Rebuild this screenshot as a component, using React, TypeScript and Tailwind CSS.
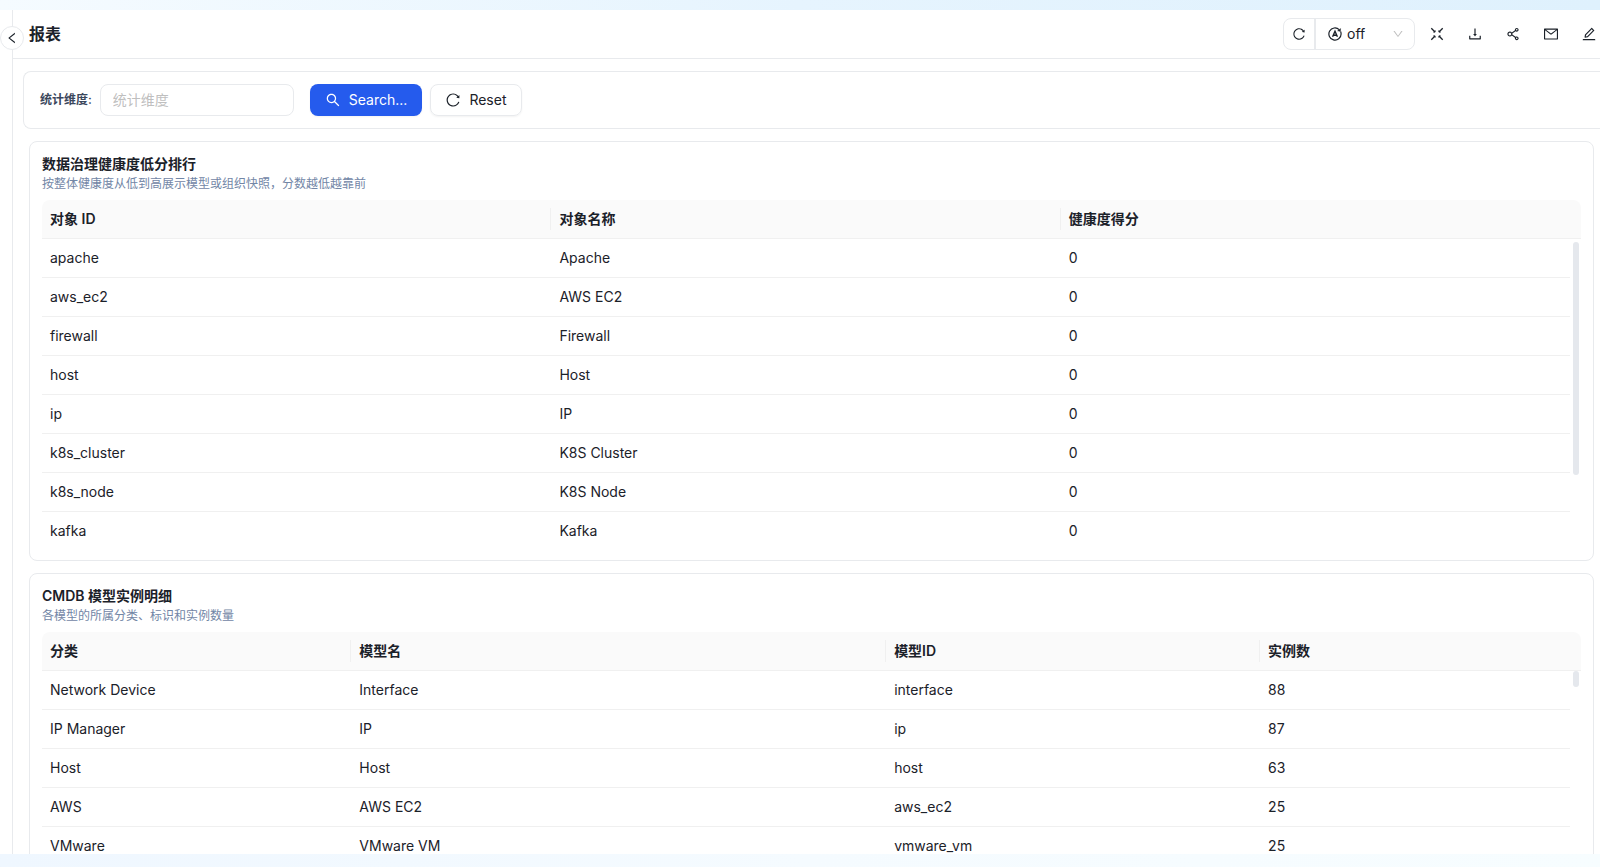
import { useState } from "react";
import {
  AiOutlineDown,
  AiOutlineDownload,
  AiOutlineEdit,
  AiOutlineLeft,
  AiOutlineMail,
  AiOutlineReload,
  AiOutlineSearch,
  AiOutlineShareAlt,
} from "react-icons/ai";

interface Column {
  title: string;
  width: string;
}

interface ReportTableProps {
  title: string;
  description: string;
  columns: Column[];
  rows: string[][];
  thumb: string;
}

const healthColumns: Column[] = [
  { title: "对象 ID", width: "w-[33.1%]" },
  { title: "对象名称", width: "w-[33.1%]" },
  { title: "健康度得分", width: "w-auto" },
];

const healthRows = [
  ["apache", "Apache", "0"],
  ["aws_ec2", "AWS EC2", "0"],
  ["firewall", "Firewall", "0"],
  ["host", "Host", "0"],
  ["ip", "IP", "0"],
  ["k8s_cluster", "K8S Cluster", "0"],
  ["k8s_node", "K8S Node", "0"],
  ["kafka", "Kafka", "0"],
];

const modelColumns: Column[] = [
  { title: "分类", width: "w-[20.1%]" },
  { title: "模型名", width: "w-[34.75%]" },
  { title: "模型ID", width: "w-[24.3%]" },
  { title: "实例数", width: "w-auto" },
];

const modelRows = [
  ["Network Device", "Interface", "interface", "88"],
  ["IP Manager", "IP", "ip", "87"],
  ["Host", "Host", "host", "63"],
  ["AWS", "AWS EC2", "aws_ec2", "25"],
  ["VMware", "VMware VM", "vmware_vm", "25"],
];

const actions = [
  { label: "全屏", icon: <FullscreenIcon /> },
  { label: "下载", icon: <AiOutlineDownload size={16} /> },
  { label: "分享", icon: <AiOutlineShareAlt size={16} /> },
  { label: "邮件", icon: <AiOutlineMail size={16} /> },
  { label: "编辑", icon: <AiOutlineEdit size={16} /> },
];

// four diagonal strokes pointing at the centre
function FullscreenIcon() {
  return (
    <svg width="14" height="14" viewBox="0 0 14 14" fill="none" stroke="currentColor" strokeWidth="1.3">
      <path d="M1.3 1.3 5 5M12.7 1.3 9 5M1.3 12.7 5 9M12.7 12.7 9 9" />
      <path d="M3.2 5.1H5.1V3.2M10.8 5.1H8.9V3.2M3.2 8.9H5.1V10.8M10.8 8.9H8.9V10.8" strokeWidth="0.8" />
    </svg>
  );
}

// circular arrow around the letter A
function AutoRefreshIcon() {
  return (
    <svg width="14" height="14" viewBox="0 0 14 14" fill="none" stroke="currentColor" strokeWidth="1.2">
      <path d="M11.2 2.6A6.1 6.1 0 1 0 13.1 7" />
      <path d="M13.1 7A6.1 6.1 0 0 0 12.6 4.6" />
      <path d="M12.6 1.6 12.4 4.4 9.6 3.8Z" fill="currentColor" strokeWidth="0.4" />
      <path d="M4.6 9.8 7 4.2l2.4 5.6M5.5 8.2h3" strokeWidth="1.4" />
    </svg>
  );
}

const ReportTable: React.FC<ReportTableProps> = ({ title, description, columns, rows, thumb }) => {
  return (
    <section className="rounded-lg border border-[#e8eaed] bg-white px-3 pt-3 pb-[9px]">
      <h2 className="text-sm leading-5 font-semibold">{title}</h2>
      <p className="text-xs leading-5 text-[#7286a6]">{description}</p>

      <div className="relative mt-1.5">
        <table className="w-full table-fixed border-separate border-spacing-0 text-left text-sm">
          <thead>
            <tr className="h-[39px]">
              {columns.map((column, i) => (
                <th
                  key={column.title}
                  className={`relative border-b border-[#f0f0f0] bg-[#fafafa] px-2 py-0 leading-5 font-semibold first:rounded-tl-lg ${column.width}`}
                >
                  {column.title}
                  {i < columns.length - 1 && (
                    <span className="absolute top-2 right-0 h-[22px] w-px bg-[#f0f0f0]" />
                  )}
                </th>
              ))}
              {/* scrollbar gutter */}
              <td className="w-[11px] rounded-tr-lg border-b border-[#f0f0f0] bg-[#fafafa] p-0" />
            </tr>
          </thead>
          <tbody>
            {rows.map((row, i) => (
              <tr key={row[0]} className="h-[39px]">
                {row.map((cell, j) => (
                  <td
                    key={j}
                    className={`border-b px-2 py-0 leading-5 ${i < rows.length - 1 ? "border-[#f0f0f0]" : "border-transparent"}`}
                  >
                    {cell}
                  </td>
                ))}
              </tr>
            ))}
          </tbody>
        </table>
        <div className={`absolute right-0.5 w-1.5 rounded-full bg-[#e5e8ed] ${thumb}`} />
      </div>
    </section>
  );
};

export default function App() {
  const [dimension, setDimension] = useState("");

  return (
    <div className="flex h-screen flex-col overflow-hidden font-['Inter','Noto_Sans_CJK_SC',sans-serif] text-sm text-[#1b2129]">
      <div className="h-2.5 shrink-0 bg-linear-to-r from-[#f5fbff] via-[#e6f4fe] to-[#dff1fd]" />

      <main className="relative min-h-0 flex-1 bg-white pl-3">
        <button
          aria-label="收起"
          className="absolute top-4 left-0 z-10 flex size-6 items-center justify-center rounded-full border border-[#e8eaed] bg-white"
        >
          <AiOutlineLeft size={14} />
        </button>

        <div className="flex h-full flex-col overflow-hidden border-l border-[#e8eaed]">
          <header className="flex h-[49px] shrink-0 items-center justify-between border-b border-[#e8eaed] pl-4">
            <h1 className="text-base font-semibold">报表</h1>

            <div className="flex items-center">
              <div className="mr-[3px] flex h-8 items-center rounded-lg border border-[#e8eaed]">
                <button
                  aria-label="刷新"
                  className="flex h-full w-8 items-center justify-center border-r-2 border-[#e8eaed]"
                >
                  <AiOutlineReload size={14} />
                </button>
                <div className="relative flex h-full items-center">
                  <span className="absolute left-3">
                    <AutoRefreshIcon />
                  </span>
                  <select
                    aria-label="自动刷新"
                    className="h-full w-[98px] appearance-none bg-transparent pl-[31px]"
                  >
                    <option>off</option>
                  </select>
                  <AiOutlineDown size={12} className="pointer-events-none absolute right-2.5 text-[#bfbfbf]" />
                </div>
              </div>
              {actions.map((action) => (
                <button
                  key={action.label}
                  aria-label={action.label}
                  className="flex h-8 w-[38px] items-center justify-center last:w-[30px] last:pl-2"
                >
                  {action.icon}
                </button>
              ))}
            </div>
          </header>

          <div className="min-h-0 flex-1 overflow-hidden pt-3 pl-2.5">
            <form
              className="flex h-[58px] items-center rounded-l-lg border border-r-0 border-[#e8eaed] pl-4"
              onSubmit={(e) => e.preventDefault()}
            >
              <label htmlFor="dimension" className="mr-2 text-xs font-semibold text-[#3b475c]">
                统计维度:
              </label>
              <input
                id="dimension"
                type="text"
                placeholder="统计维度"
                value={dimension}
                onChange={(e) => setDimension(e.target.value)}
                className="mr-4 h-8 w-[194px] rounded-lg border border-[#e8eaed] px-3 pb-0.5 placeholder:text-[#bfbfbf]"
              />
              <button
                type="submit"
                className="mr-2 flex h-8 items-center gap-2 rounded-lg bg-[#255bed] px-[15px] text-white shadow-xs"
              >
                <AiOutlineSearch size={16} />
                Search...
              </button>
              <button
                type="reset"
                onClick={() => setDimension("")}
                className="flex h-8 items-center gap-2 rounded-lg border border-[#e8eaed] px-3.5 shadow-xs"
              >
                <AiOutlineReload size={16} />
                Reset
              </button>
            </form>

            <div className="flex flex-col gap-3 pt-3 pr-1.5 pl-1.5">
              <ReportTable
                title="数据治理健康度低分排行"
                description="按整体健康度从低到高展示模型或组织快照，分数越低越靠前"
                columns={healthColumns}
                rows={healthRows}
                thumb="top-[42px] h-[233px]"
              />
              <ReportTable
                title="CMDB 模型实例明细"
                description="各模型的所属分类、标识和实例数量"
                columns={modelColumns}
                rows={modelRows}
                thumb="top-[39px] h-4"
              />
            </div>
          </div>
        </div>
      </main>

      <div className="h-[13px] shrink-0 bg-linear-to-r from-[#eff7ff] via-[#f5fbff] to-[#f7fdff]" />
    </div>
  );
}
